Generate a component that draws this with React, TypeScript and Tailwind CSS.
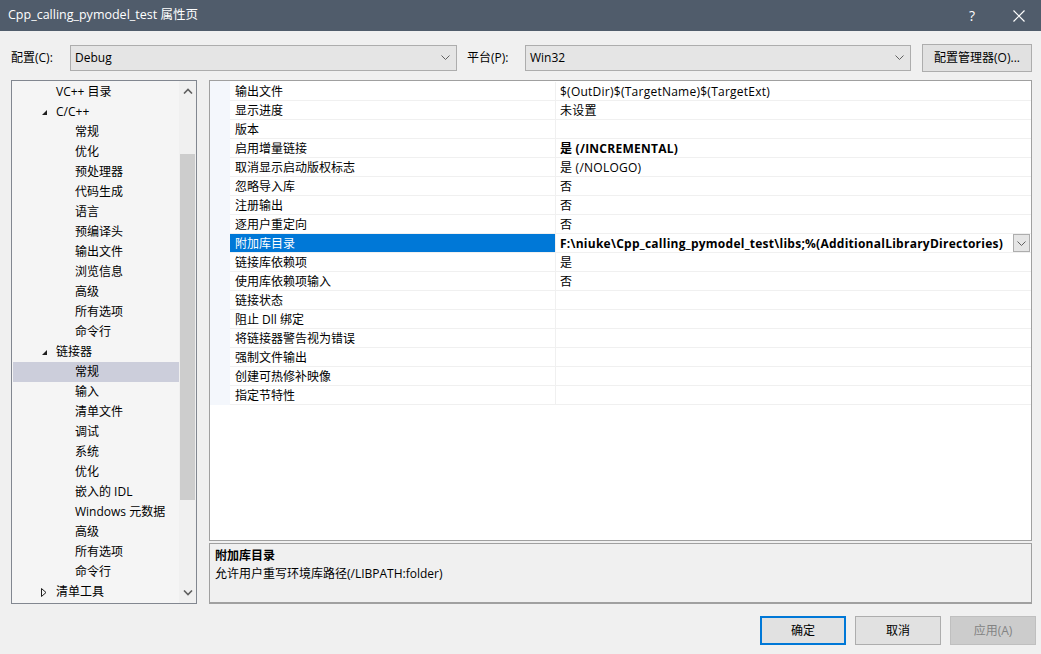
import React from "react";

const FONT = { fontFamily: '"Open Sans", "Noto Sans CJK SC", sans-serif' };

type TreeItem = { label: string; level: 0 | 1 | 2; arrow?: "open" | "closed"; selected?: boolean };

const tree: TreeItem[] = [
  { label: "VC++ 目录", level: 1 },
  { label: "C/C++", level: 1, arrow: "open" },
  ...["常规", "优化", "预处理器", "代码生成", "语言", "预编译头", "输出文件", "浏览信息", "高级", "所有选项", "命令行"].map(
    (l) => ({ label: l, level: 2 as const })
  ),
  { label: "链接器", level: 1, arrow: "open" },
  ...["常规", "输入", "清单文件", "调试", "系统", "优化", "嵌入的 IDL", "Windows 元数据", "高级", "所有选项", "命令行"].map(
    (l, i) => ({ label: l, level: 2 as const, selected: i === 0 })
  ),
  { label: "清单工具", level: 1, arrow: "closed" },
];

type Row = { name: string; value: string; bold?: boolean; selected?: boolean };
const rows: Row[] = [
  { name: "输出文件", value: "$(OutDir)$(TargetName)$(TargetExt)" },
  { name: "显示进度", value: "未设置" },
  { name: "版本", value: "" },
  { name: "启用增量链接", value: "是 (/INCREMENTAL)", bold: true },
  { name: "取消显示启动版权标志", value: "是 (/NOLOGO)" },
  { name: "忽略导入库", value: "否" },
  { name: "注册输出", value: "否" },
  { name: "逐用户重定向", value: "否" },
  { name: "附加库目录", value: "F:\\niuke\\Cpp_calling_pymodel_test\\libs;%(AdditionalLibraryDirectories)", bold: true, selected: true },
  { name: "链接库依赖项", value: "是" },
  { name: "使用库依赖项输入", value: "否" },
  { name: "链接状态", value: "" },
  { name: "阻止 Dll 绑定", value: "" },
  { name: "将链接器警告视为错误", value: "" },
  { name: "强制文件输出", value: "" },
  { name: "创建可热修补映像", value: "" },
  { name: "指定节特性", value: "" },
];

function Chevron({ up = false }: { up?: boolean }) {
  return (
    <svg width="10" height="6" viewBox="0 0 10 6">
      <path d={up ? "M1 5.5 L5 1.5 L9 5.5" : "M1 0.5 L5 4.5 L9 0.5"} fill="none" stroke="currentColor" strokeWidth="1.6" />
    </svg>
  );
}

function SmallChevron() {
  return (
    <svg width="9" height="5" viewBox="0 0 9 5">
      <path d="M0.5 0.5 L4.5 4.5 L8.5 0.5" fill="none" stroke="#606060" strokeWidth="1" />
    </svg>
  );
}

function Select({ value, width }: { value: string; width: string }) {
  return (
    <div className={`${width} h-[26px] bg-[#e5e5e5] border border-[#adadad] flex items-center justify-between pl-[4px] pr-[6px] text-[12px] text-black`}>
      <span>{value}</span>
      <SmallChevron />
    </div>
  );
}

export default function App() {
  return (
    <div className="w-[1041px] h-[654px] bg-[#f0f0f0] flex flex-col overflow-hidden text-[12px] text-black" style={FONT}>
      {/* Title bar */}
      <div className="h-[31px] bg-[#505c6b] flex items-center pl-[8px] text-white">
        <span className="text-[12.5px] flex-1">Cpp_calling_pymodel_test 属性页</span>
        <span className="text-[14px] w-[10px] mr-[36px] text-center">?</span>
        <svg width="12" height="12" viewBox="0 0 12 12" className="mr-[16px]">
          <path d="M0.5 0.5 L11.5 11.5 M11.5 0.5 L0.5 11.5" stroke="white" strokeWidth="1.2" />
        </svg>
      </div>

      {/* Config row */}
      <div className="h-[49px] flex items-center pl-[11px] pt-[4px]">
        <span className="w-[59px]">配置(C):</span>
        <Select value="Debug" width="w-[387px]" />
        <span className="ml-[10px] w-[58px]">平台(P):</span>
        <Select value="Win32" width="w-[386px]" />
        <div className="ml-[11px] w-[110px] h-[28px] bg-[#e1e1e1] border border-[#adadad] flex items-center justify-center">
          配置管理器(O)...
        </div>
      </div>

      {/* Main */}
      <div className="flex pl-[11px] h-[524px]">
        {/* Tree */}
        <div className="w-[186px] h-[524px] border border-[#828790] bg-[#f5f5f5] flex">
          <div className="flex-1 pt-[1px] flex flex-col">
            {tree.map((t, i) => (
              <div
                key={i}
                className={`h-[20px] flex items-center ${t.selected ? "bg-[#cccedb] ml-[1px]" : ""}`}
              >
                <div className={`${t.selected ? "w-[58px]" : t.level === 2 ? "w-[59px]" : "w-[40px]"} flex justify-end pr-[5px]`}>
                  {t.arrow === "open" && (
                    <svg width="5" height="5" viewBox="0 0 5 5">
                      <path d="M5 0 L5 5 L0 5 Z" fill="#1e1e1e" />
                    </svg>
                  )}
                  {t.arrow === "closed" && (
                    <svg width="6" height="9" viewBox="0 0 6 9">
                      <path d="M0.5 0.5 L5 4.5 L0.5 8.5 Z" fill="none" stroke="#1e1e1e" strokeWidth="1" />
                    </svg>
                  )}
                </div>
                <span className="ml-[4px]">{t.label}</span>
              </div>
            ))}
          </div>
          {/* Scrollbar */}
          <div className="w-[17px] bg-[#f0f0f0] flex flex-col items-center">
            <div className="h-[20px] flex items-center justify-center text-[#606060]">
              <Chevron up />
            </div>
            <div className="w-[15px] h-[53px]" />
            <div className="w-[15px] h-[346px] bg-[#cdcdcd]" />
            <div className="flex-1" />
            <div className="h-[20px] flex items-center justify-center text-[#606060]">
              <Chevron />
            </div>
          </div>
        </div>

        {/* Right side */}
        <div className="ml-[12px] w-[823px] flex flex-col">
          <div className="h-[462px] border border-[#a0a0a0] bg-white flex flex-col">
            <div className="h-[1px] flex">
              <div className="w-[20px] bg-[#f4f7fc]" />
            </div>
            {rows.map((r, i) => (
              <div key={i} className="h-[19px] flex">
                <div className="w-[20px] bg-[#f4f7fc]" />
                <div className="flex-1 flex border-b border-[#f0f0f0]">
                  <div
                    className={`w-[326px] pl-[5px] pt-[1px] flex items-center border-r border-[#f0f0f0] ${
                      r.selected ? "bg-[#0078d7] text-white" : ""
                    }`}
                  >
                    {r.name}
                  </div>
                  <div className={`flex-1 pl-[4px] flex items-center tracking-[0.25px] ${r.bold ? "font-bold" : ""}`}>
                    <span className="flex-1 pt-[1px]">{r.value}</span>
                    {r.selected && (
                      <div className="w-[17px] h-[18px] bg-[#e5e5e5] border border-[#adadad] flex items-center justify-center mr-[1px]">
                        <SmallChevron />
                      </div>
                    )}
                  </div>
                </div>
              </div>
            ))}
          </div>
          <div className="mt-[2px] h-[61px] border border-[#a0a0a0] border-b-2 bg-[#f0f0f0] pl-[5px] pt-[3px] leading-[18px]">
            <div className="font-bold">附加库目录</div>
            <div>允许用户重写环境库路径(/LIBPATH:folder)</div>
          </div>
        </div>
      </div>

      {/* Buttons */}
      <div className="flex justify-end pr-[5px] pt-[12px] gap-[9px]">
        <div className="w-[86px] h-[29px] border-2 border-[#0078d7] bg-[#e1e1e1] flex items-center justify-center">确定</div>
        <div className="w-[86px] h-[29px] border border-[#adadad] bg-[#e1e1e1] flex items-center justify-center">取消</div>
        <div className="w-[86px] h-[29px] border border-[#bfbfbf] bg-[#cccccc] text-[#838383] flex items-center justify-center">应用(A)</div>
      </div>
    </div>
  );
}
